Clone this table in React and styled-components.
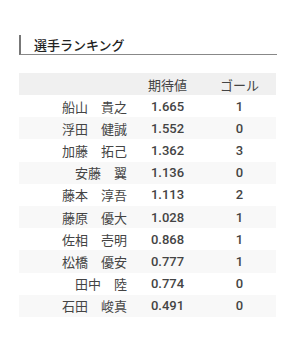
import React from 'react';
import styled, { createGlobalStyle } from 'styled-components';

const players = [
    { name: '船山　貴之', xg: '1.665', goals: 1 },
    { name: '浮田　健誠', xg: '1.552', goals: 0 },
    { name: '加藤　拓己', xg: '1.362', goals: 3 },
    { name: '安藤　翼', xg: '1.136', goals: 0 },
    { name: '藤本　淳吾', xg: '1.113', goals: 2 },
    { name: '藤原　優大', xg: '1.028', goals: 1 },
    { name: '佐相　壱明', xg: '0.868', goals: 1 },
    { name: '松橋　優安', xg: '0.777', goals: 1 },
    { name: '田中　陸', xg: '0.774', goals: 0 },
    { name: '石田　峻真', xg: '0.491', goals: 0 },
];

const App = () => {
    return (
        <>
            <GlobalStyle />
            <Container>
                <Heading>選手ランキング</Heading>
                <Table>
                    <thead>
                        <tr>
                            <HeadCell />
                            <HeadCell>期待値</HeadCell>
                            <HeadCell>ゴール</HeadCell>
                        </tr>
                    </thead>
                    <tbody>
                        {players.map(p => (
                            <Row key={p.name}>
                                <NameCell>{p.name}</NameCell>
                                <NumCell>{p.xg}</NumCell>
                                <NumCell>{p.goals}</NumCell>
                            </Row>
                        ))}
                    </tbody>
                </Table>
            </Container>
        </>
    );
};

const GlobalStyle = createGlobalStyle`
    body {
        margin: 0;
        background: #fff;
        font-family: Roboto, "Noto Sans CJK JP", sans-serif;
    }
`;

const Container = styled.div`
    width: 258px;
    padding: 35px 0 0 19px;
`;

const Heading = styled.h2`
    margin: 0;
    height: 19px;
    line-height: 19px;
    padding-left: 13px;
    border-left: 2px solid #777;
    border-bottom: 1px solid #888;
    font-family: "Noto Sans CJK JP", sans-serif;
    font-size: 13px;
    font-weight: 500;
    color: #222;
`;

const Table = styled.table`
    margin-top: 18px;
    width: 257px;
    border-collapse: collapse;
    table-layout: fixed;

    th:nth-child(1), td:nth-child(1) { width: 113px; }
    th:nth-child(2), td:nth-child(2) { width: 71px; }
`;

const HeadCell = styled.th`
    height: 22px;
    padding: 0;
    background: #f0f0f0;
    font-family: "Noto Sans CJK JP", sans-serif;
    font-size: 13px;
    font-weight: 400;
    color: #444;
    text-align: center;
`;

const Row = styled.tr`
    height: 22.2px;
    &:nth-child(even) {
        background: #f8f8f8;
    }
`;

const NameCell = styled.td`
    padding: 0 5px 0 0;
    text-align: right;
    font-family: "Noto Sans CJK JP", sans-serif;
    font-size: 13px;
    color: #444;
`;

const NumCell = styled.td`
    padding: 0;
    text-align: center;
    font-family: Roboto, sans-serif;
    font-size: 13px;
    font-weight: 500;
    color: #444;
`;

export default App;
